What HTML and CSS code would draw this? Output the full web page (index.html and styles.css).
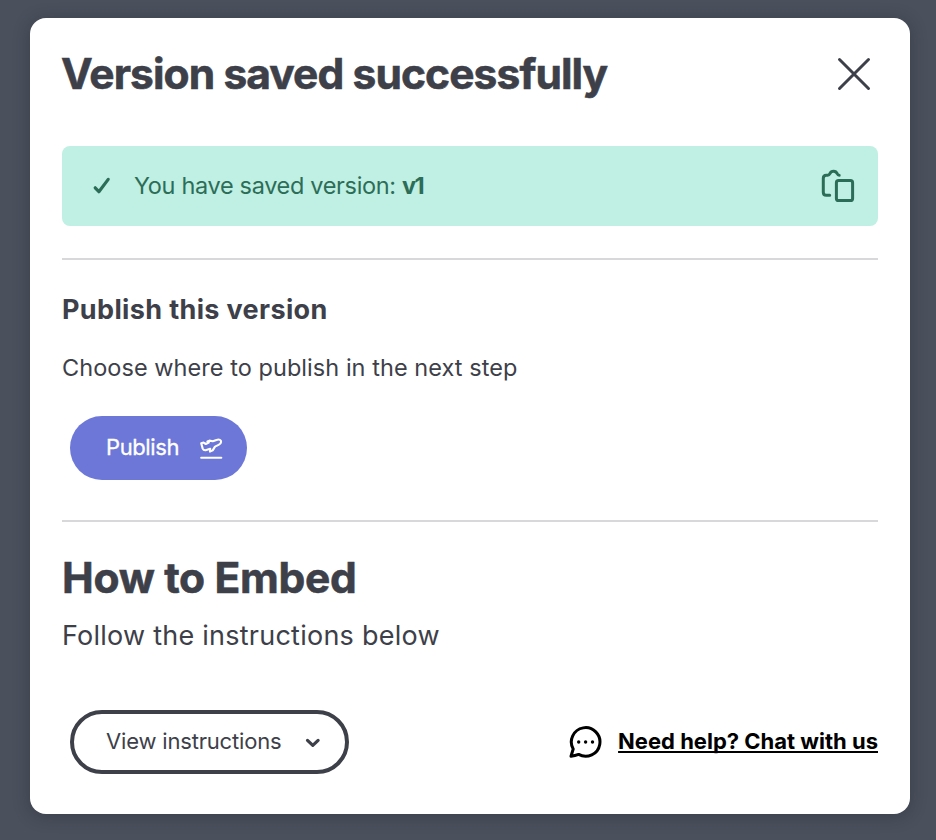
FILE: index.html
```html
<!DOCTYPE html>
<html lang="en">
<head>
<meta charset="utf-8">
<title>Version saved</title>
<link rel="stylesheet" href="styles.css">
</head>
<body>
<main class="modal">
  <header class="modal-header">
    <h1 class="title">Version saved successfully</h1>
    <svg class="close" width="48" height="48" viewBox="0 0 48 48"><path d="M9.5 9.5 38.5 38.5M38.5 9.5 9.5 38.5"/></svg>
  </header>
  <section class="alert">
    <svg class="check" width="24" height="24" viewBox="0 0 24 24"><path d="m5.2 13.8 3.7 3.9 9.3-12.3"/></svg>
    <p class="alert-text">You have saved version: <b>v1</b></p>
    <svg class="copy" width="40" height="40" viewBox="0 0 40 40"><path d="M11.7 29.3H8.3q-3 0-3-3V12.2q0-3 3-3h1.5c1.2 0 1.6-.6 2.1-1.6 1.5-3.1 5.9-3.1 7.3.1.5 1 1 1.5 2 1.5"/><rect x="18.4" y="14.5" width="16.2" height="20.1" rx="2.2"/></svg>
  </section>
  <section class="publish">
    <h2 class="subtitle">Publish this version</h2>
    <p class="text">Choose where to publish in the next step</p>
    <button class="btn btn-primary"><span class="publish-label">Publish</span><svg class="plane" width="24" height="24" viewBox="0 0 24 24"><path d="M2.2 21.8h20.1"/><path d="M2.2 7.2 4.6 6.6 6.8 8 9.8 6.6 8.4 5.4 10.4 4.6 13.8 5.2 17.5 3.9C20.4 3 22.3 4 22.1 5.9 22 7.2 21.1 8.2 19.6 8.9L16 10.6 13.7 14.4 11 15.6 11.2 12.8 6.6 14.2Q4.6 14.5 3.7 12.6Z"/></svg></button>
  </section>
  <section class="embed">
    <h1 class="title embed-title">How to Embed</h1>
    <p class="lead">Follow the instructions below</p>
  </section>
  <footer class="footer">
    <button class="btn btn-outline"><span class="view-label">View instructions</span><svg class="chevron" width="18" height="18" viewBox="0 0 18 18"><path d="m3.5 7.4 5.3 5L14.1 7.4"/></svg></button>
    <a class="help"><svg class="chat" width="34" height="34" viewBox="0 0 34 34"><path d="M2 31.3 4.2 24A14.3 14.3 0 1 1 9.6 29.4Q6 30.8 2 31.3z"/><circle cx="9.7" cy="17" r="1.7"/><circle cx="16.6" cy="17" r="1.7"/><circle cx="23.5" cy="17" r="1.7"/></svg><span class="help-label">Need help? Chat with us</span></a>
  </footer>
</main>
</body>
</html>
```
FILE: styles.css
```css
* { box-sizing: border-box; margin: 0; }
body { padding: 18px 26px 26px 30px; height: 840px; background: #4a505c; color: #3d4049; font-family: Inter, "Noto Sans", sans-serif; overflow: hidden; }
svg { fill: none; stroke: currentColor; stroke-linecap: round; stroke-linejoin: round; flex: none; display: block; }
.modal { width: 880px; height: 796px; padding: 32px; border-radius: 16px; background: #fff; box-shadow: 0 2px 16px rgba(25, 32, 42, .35); }
.modal-header { display: flex; justify-content: space-between; align-items: center; height: 48px; }
.title { margin-left: -1px; font-size: 42.5px; line-height: 48px; font-weight: 700; letter-spacing: -.91px; white-space: nowrap; -webkit-text-stroke: .6px currentColor; }
.embed-title { margin-left: 0; letter-spacing: -.3px; }
.close { stroke-width: 3; }
.alert { display: flex; align-items: center; height: 80px; margin-top: 48px; padding: 0 20px 0 28px; border-radius: 8px; background: #c0efe3; color: #2c6d58; }
.check { stroke-width: 3.2; }
.alert-text { flex: 1; margin-left: 20px; font-size: 23.5px; line-height: 36px; letter-spacing: -.33px; }
.alert-text b { letter-spacing: -1.8px; }
.copy { stroke-width: 3; }
.publish { margin-top: 32px; padding: 33px 0 40px; border-top: 2px solid #d8d8da; border-bottom: 2px solid #d8d8da; }
.subtitle { font-size: 27px; line-height: 34px; font-weight: 700; letter-spacing: .36px; }
.text { margin-top: 23px; font-size: 23.5px; line-height: 36px; letter-spacing: .05px; }
.btn { display: flex; align-items: center; height: 64px; margin-left: 8px; border: 0; border-radius: 32px; font: 400 22px/32px Inter, sans-serif; }
.btn span { padding-bottom: 2px; }
.btn-primary { width: 177px; margin-top: 30px; padding: 0 24px 0 36px; justify-content: space-between; background: #6c77d8; color: #fff; }
.publish-label { letter-spacing: -.4px; -webkit-text-stroke: .3px currentColor; }
.view-label { letter-spacing: -.18px; }
.plane { stroke-width: 2.1; }
.embed { margin-top: 32px; }
.lead { margin-top: 15px; font-size: 27px; line-height: 38px; letter-spacing: .24px; }
.footer { display: flex; justify-content: space-between; align-items: center; margin-top: 55px; }
.btn-outline { width: 279px; padding: 0 23px 0 32px; justify-content: space-between; border: 4px solid #3d4049; background: #fff; color: #3d4049; }
.chevron { stroke-width: 3.2; }
.help { display: flex; align-items: center; gap: 15px; color: #000; font-size: 22px; line-height: 32px; font-weight: 700; }
.help-label { padding-bottom: 2px; text-decoration: underline; text-decoration-thickness: 2px; text-underline-offset: 2px; text-decoration-skip-ink: none; }
.chat { stroke-width: 3; }
.chat circle { fill: currentColor; stroke: none; }
```
